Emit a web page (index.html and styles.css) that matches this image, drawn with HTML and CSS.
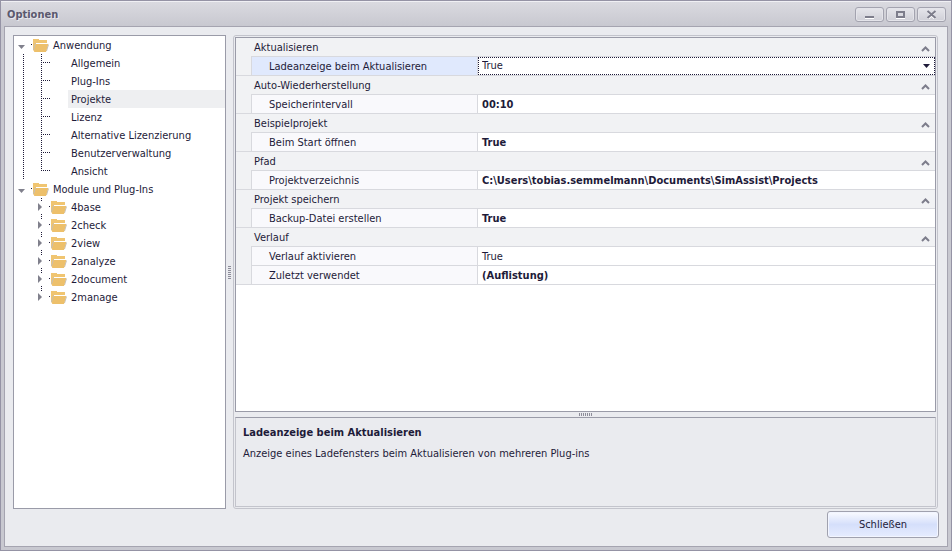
FILE: index.html
```
<!DOCTYPE html>
<html lang="de">
<head>
    <meta charset="UTF-8">
    <meta name="viewport" content="width=device-width, initial-scale=1">
    <title>Optionen</title>
    <link rel="stylesheet" href="styles.css">
</head>
<body>
    <svg class="symbols" width="0" height="0" aria-hidden="true">
        <symbol id="folder" viewBox="0 0 18 14">
            <rect x="0" y="6" width="1" height="1" fill="#1e1b39"/>
            <path d="M2 1h6v1h8v4h1v1l-2 6H3L2 12z" fill="#f0c571"/>
            <path d="M5 5h11v1H5z" fill="#fff"/>
            <path d="M4.500 5.500L2.500 12M17.500 6.500L15.500 13" fill="none" stroke="#c2beb8"/>
            <path d="M5 6h12l-2 8H3z" fill="#edc06b"/>
        </symbol>
        <symbol id="open" viewBox="0 0 11 12">
            <path d="M1 6h7L4.500 10z" fill="#80808c"/>
        </symbol>
        <symbol id="closed" viewBox="0 0 11 12">
            <path d="M3 2v8l4-4z" fill="#80808c"/>
        </symbol>
        <symbol id="up" viewBox="0 0 9 7">
            <path d="M1 6L4.500 2.500L8 6" fill="none" stroke="#7d7d8b" stroke-width="2"/>
        </symbol>
    </svg>

    <div class="window">
        <header class="titlebar">
            <h1>Optionen</h1>
            <div class="window-buttons">
                <button type="button" aria-label="Minimieren"><svg width="13" height="9"><path d="M2 8h9v1H2z" fill="#fff"/><path d="M2 6h9v2H2z" fill="#7d7d8b"/></svg></button>
                <button type="button" aria-label="Maximieren"><svg width="13" height="9"><path d="M2 8h9v1H2z" fill="#fff"/><path d="M3 2h7v5H3z" fill="none" stroke="#7d7d8b" stroke-width="2"/></svg></button>
                <button type="button" aria-label="Fenster schließen"><svg width="13" height="9"><path d="M3 2l7 7M10 2L3 9" stroke="#fff" stroke-width="2"/><path d="M2.500 1l8 7M10.500 1l-8 7" stroke="#7d7d8b" stroke-width="2"/></svg></button>
            </div>
        </header>

        <div class="content">
            <main class="panes">
                <nav class="tree" aria-label="Kategorien">
                    <ul>
                        <li>
                            <div class="node"><button type="button" class="toggle" aria-label="Anwendung zuklappen"><svg><use href="#open"/></svg></button><svg class="folder"><use href="#folder"/></svg><span>Anwendung</span></div>
                            <ul class="leaves">
                                <li><a href="#">Allgemein</a></li>
                                <li><a href="#">Plug-Ins</a></li>
                                <li><a href="#" class="selected">Projekte</a></li>
                                <li><a href="#">Lizenz</a></li>
                                <li><a href="#">Alternative Lizenzierung</a></li>
                                <li><a href="#">Benutzerverwaltung</a></li>
                                <li><a href="#">Ansicht</a></li>
                            </ul>
                        </li>
                        <li>
                            <div class="node"><button type="button" class="toggle" aria-label="Module und Plug-Ins zuklappen"><svg><use href="#open"/></svg></button><svg class="folder"><use href="#folder"/></svg><span>Module und Plug-Ins</span></div>
                            <ul class="folders">
                                <li class="node"><button type="button" class="toggle" aria-label="4base aufklappen"><svg><use href="#closed"/></svg></button><svg class="folder"><use href="#folder"/></svg><span>4base</span></li>
                                <li class="node"><button type="button" class="toggle" aria-label="2check aufklappen"><svg><use href="#closed"/></svg></button><svg class="folder"><use href="#folder"/></svg><span>2check</span></li>
                                <li class="node"><button type="button" class="toggle" aria-label="2view aufklappen"><svg><use href="#closed"/></svg></button><svg class="folder"><use href="#folder"/></svg><span>2view</span></li>
                                <li class="node"><button type="button" class="toggle" aria-label="2analyze aufklappen"><svg><use href="#closed"/></svg></button><svg class="folder"><use href="#folder"/></svg><span>2analyze</span></li>
                                <li class="node"><button type="button" class="toggle" aria-label="2document aufklappen"><svg><use href="#closed"/></svg></button><svg class="folder"><use href="#folder"/></svg><span>2document</span></li>
                                <li class="node"><button type="button" class="toggle" aria-label="2manage aufklappen"><svg><use href="#closed"/></svg></button><svg class="folder"><use href="#folder"/></svg><span>2manage</span></li>
                            </ul>
                        </li>
                    </ul>
                </nav>

                <div class="splitter vertical"><span class="grip"></span></div>

                <section class="details">
                    <div class="grid">
                        <table>
                            <colgroup><col class="col-indent"><col class="col-name"><col></colgroup>
                            <tbody>
                                <tr class="category"><td></td><th colspan="2"><div>Aktualisieren<button type="button" aria-label="Aktualisieren zuklappen"><svg><use href="#up"/></svg></button></div></th></tr>
                                <tr class="active">
                                    <td class="indent"></td>
                                    <th><label for="loading">Ladeanzeige beim Aktualisieren</label></th>
                                    <td class="editor"><select id="loading"><option>True</option><option>False</option></select></td>
                                </tr>
                                <tr class="category"><td></td><th colspan="2"><div>Auto-Wiederherstellung<button type="button" aria-label="Auto-Wiederherstellung zuklappen"><svg><use href="#up"/></svg></button></div></th></tr>
                                <tr><td class="indent"></td><th>Speicherintervall</th><td class="changed">00:10</td></tr>
                                <tr class="category"><td></td><th colspan="2"><div>Beispielprojekt<button type="button" aria-label="Beispielprojekt zuklappen"><svg><use href="#up"/></svg></button></div></th></tr>
                                <tr><td class="indent"></td><th>Beim Start öffnen</th><td class="changed">True</td></tr>
                                <tr class="category"><td></td><th colspan="2"><div>Pfad<button type="button" aria-label="Pfad zuklappen"><svg><use href="#up"/></svg></button></div></th></tr>
                                <tr><td class="indent"></td><th>Projektverzeichnis</th><td class="changed">C:\Users\tobias.semmelmann\Documents\SimAssist\Projects</td></tr>
                                <tr class="category"><td></td><th colspan="2"><div>Projekt speichern<button type="button" aria-label="Projekt speichern zuklappen"><svg><use href="#up"/></svg></button></div></th></tr>
                                <tr><td class="indent"></td><th>Backup-Datei erstellen</th><td class="changed">True</td></tr>
                                <tr class="category"><td></td><th colspan="2"><div>Verlauf<button type="button" aria-label="Verlauf zuklappen"><svg><use href="#up"/></svg></button></div></th></tr>
                                <tr><td class="indent"></td><th>Verlauf aktivieren</th><td>True</td></tr>
                                <tr class="last"><td class="indent"></td><th>Zuletzt verwendet</th><td class="changed">(Auflistung)</td></tr>
                            </tbody>
                        </table>
                    </div>
                    <div class="splitter horizontal"><span class="grip"></span></div>
                    <div class="description">
                        <h2>Ladeanzeige beim Aktualisieren</h2>
                        <p>Anzeige eines Ladefensters beim Aktualisieren von mehreren Plug-ins</p>
                    </div>
                </section>
            </main>

            <footer>
                <button type="button" class="close-button">Schließen</button>
            </footer>
        </div>
    </div>
</body>
</html>
```
FILE: styles.css
```
* {
    box-sizing: border-box;
}
body {
    margin: 0;
    font-family: "DejaVu Sans Condensed", "DejaVu Sans", sans-serif;
    font-size: 11px;
    line-height: 16px;
    color: #1e1b39;
}
h1, h2, p, ul {
    margin: 0;
    padding: 0;
}
ul {
    list-style: none;
}
button, select {
    font: inherit;
    color: inherit;
    padding: 0;
    margin: 0;
}
svg {
    display: block;
}
.symbols {
    display: none;
}

/* Window frame */
.window {
    display: flex;
    flex-direction: column;
    min-height: 100vh;
    padding: 0 3px 3px;
    border: 1px solid #9593a5;
    background: #c8c8d0;
}
.titlebar {
    display: flex;
    align-items: center;
    justify-content: space-between;
    height: 25px;
    margin: 0 -3px;
    padding: 0 5px 0 6px;
    border-top: 1px solid #f0f0f4;
    background: linear-gradient(#dadae0, #c8c8d0);
}
.titlebar h1 {
    padding-top: 1px;
    font-size: 11px;
    color: #5b596e;
    text-shadow: 1px 1px 0 #e8e8ee;
}
.window-buttons {
    display: flex;
    gap: 2px;
}
.window-buttons button {
    display: flex;
    align-items: center;
    justify-content: center;
    width: 29px;
    height: 15px;
    border: 1px solid #a3a3af;
    border-radius: 3px;
    background: linear-gradient(#e6e6eb, #cfcfd7);
    box-shadow: inset 0 0 0 1px #e4e4ea;
}
.content {
    display: flex;
    flex: 1;
    flex-direction: column;
    gap: 2px;
    padding: 8px;
    border: 1px solid #a5a4b0;
    background: #eaebef;
}
.panes {
    display: flex;
    flex: 1;
    padding-right: 1px;
}

/* Tree */
.tree {
    width: 213px;
    border: 1px solid #9a9ba8;
    background: #fff;
}
.node {
    display: flex;
    align-items: center;
    gap: 3px;
    height: 18px;
    padding-left: 3px;
}
.node span {
    padding: 2px 0 0 1px;
}
.toggle {
    width: 11px;
    height: 12px;
    border: 0;
    background: #fff;
}
.toggle svg {
    width: 11px;
    height: 12px;
}
.folder {
    width: 18px;
    height: 14px;
}
.leaves {
    background: repeating-linear-gradient(#1e1b39 0 1px, transparent 1px 2px) 9px 0 / 1px 100% no-repeat;
}
.leaves li {
    padding-left: 54px;
    background:
        repeating-linear-gradient(#1e1b39 0 1px, transparent 1px 2px) 27px 0 / 1px 100% no-repeat,
        repeating-linear-gradient(90deg, #1e1b39 0 1px, transparent 1px 2px) 27px 8px / 9px 1px no-repeat;
}
.leaves li:last-child {
    background-size: 1px 9px, 9px 1px;
}
.leaves a {
    display: block;
    padding: 2px 0 0 3px;
    color: inherit;
    text-decoration: none;
}
.leaves .selected {
    background: #eeeff1;
}
.folders .node {
    padding-left: 21px;
    background: repeating-linear-gradient(#1e1b39 0 1px, transparent 1px 2px) 27px 0 / 1px 100% no-repeat;
}
.folders .node:last-child {
    background-size: 1px 9px;
}

/* Splitters */
.splitter {
    display: flex;
    align-items: center;
    justify-content: center;
}
.vertical {
    width: 7px;
}
.horizontal {
    height: 5px;
}
.vertical .grip {
    width: 3px;
    height: 13px;
    background: repeating-linear-gradient(#8d8d99 0 1px, transparent 1px 2px);
}
.horizontal .grip {
    width: 13px;
    height: 3px;
    background: repeating-linear-gradient(90deg, #8d8d99 0 1px, transparent 1px 2px);
}

/* Property grid */
.details {
    display: flex;
    flex: 1;
    flex-direction: column;
    min-width: 0;
    padding: 1px;
    border: 1px solid #c3c4cc;
    border-radius: 3px;
}
.grid {
    flex: 1;
    border: 1px solid #9a9ba8;
    background: #fff;
}
table {
    width: 100%;
    table-layout: fixed;
    border-collapse: separate;
    border-spacing: 0;
}
.col-indent {
    width: 15px;
}
.col-name {
    width: 227px;
}
th, td {
    height: 19px;
    padding: 2px 4px 0;
    border-bottom: 1px solid #d8d9de;
    font-weight: normal;
    text-align: left;
    white-space: nowrap;
}
th {
    padding-left: 17px;
    border-left: 1px solid #d8d9de;
    border-right: 1px solid #d8d9de;
    background: #f9f9fc;
}
th label {
    display: block;
}
.indent {
    border-bottom: 0;
    background: #f1f2f4;
}
tr:has(+ .category) .indent,
.last .indent {
    border-bottom: 1px solid #d8d9de;
}
.category td,
.category th {
    background: #f1f2f4;
}
.category td {
    border-bottom: 0;
}
.category th {
    padding: 2px 5px 0 3px;
    border-right: 0;
    border-left: 0;
}
.category div {
    display: flex;
    align-items: center;
    justify-content: space-between;
}
.category button {
    border: 0;
    background: none;
}
.category svg {
    width: 9px;
    height: 7px;
}
.active th {
    background: #e0e9fd;
}
.changed {
    font-weight: bold;
}
.editor {
    padding: 0;
}
.editor select {
    display: block;
    width: 100%;
    height: 18px;
    padding-left: 3px;
    border: 1px dotted #1e1b39;
    border-radius: 0;
    appearance: none;
    background: url("data:image/svg+xml,%3Csvg xmlns='http://www.w3.org/2000/svg' width='7' height='4'%3E%3Cpath d='M0 0h7L3.500 4z' fill='%231e1b39'/%3E%3C/svg%3E") right 4px center no-repeat #fff;
}

.description {
    height: 90px;
    padding: 7px;
    border: 1px solid #c3c4cc;
    border-top-color: #9a9ba8;
}
.description h2 {
    margin-bottom: 5px;
    font-size: 11px;
    line-height: 16px;
}

footer {
    display: flex;
    justify-content: flex-end;
}
.close-button {
    width: 112px;
    height: 27px;
    border: 1px solid #a0a1ae;
    border-radius: 3px;
    background: linear-gradient(#fafbff, #d5dffb 50%, #e6ecfe);
    box-shadow: inset 0 0 0 1px #f2f5ff;
}
```
